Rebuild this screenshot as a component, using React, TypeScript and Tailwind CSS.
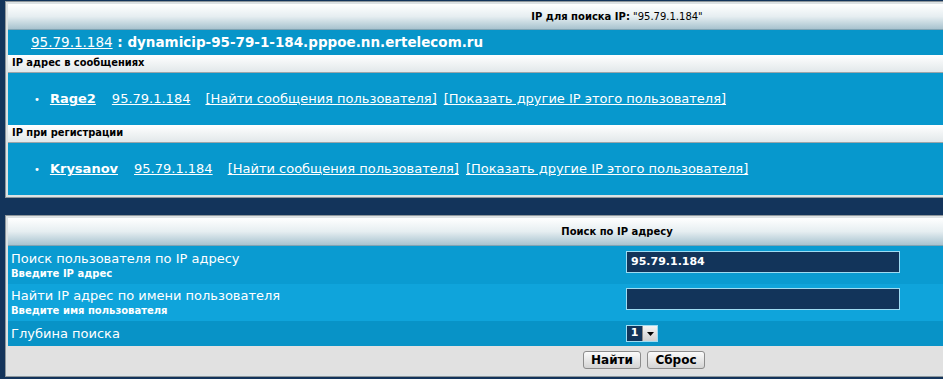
const font = "font-['DejaVu_Sans',Verdana,sans-serif]";

function HeadBar({ children, h }: { children?: React.ReactNode; h: string }) {
  return (
    <div
      className={`${h} flex items-center justify-center border-b border-[#7fa3b3] bg-gradient-to-b from-[#ffffff] via-[#e6eef1] to-[#a8c3cf] text-[10px] text-black`}
    >
      {children}
    </div>
  );
}

function SectionBar({ title }: { title: string }) {
  return (
    <div className="h-[18px] flex items-center border-b border-[#9aa5aa] bg-gradient-to-b from-[#ffffff] to-[#e2e8ea] pl-[4px] font-['DejaVu_Sans_Condensed','DejaVu_Sans',sans-serif] text-[11px] font-bold text-black">
      {title}
    </div>
  );
}

function UserRow({ name }: { name: string }) {
  return (
    <div className="h-[52px] flex items-center bg-[#0798cd] pl-[26px] text-[13px] text-white">
      <span className="mr-[10px] text-[10px]">•</span>
      <a className="font-bold underline">{name}</a>
      <span className="w-[16px]" />
      <a className="underline">95.79.1.184</a>
      <span className="w-[15px]" />
      <a className="underline">[Найти сообщения пользователя]</a>
      <span className="w-[7px]" />
      <a className="underline">[Показать другие IP этого пользователя]</a>
    </div>
  );
}

function Frame({ children }: { children: React.ReactNode }) {
  return (
    <div className="w-[1224px] border border-[#8f979c] bg-[#dde2e4] p-[2px]">
      <div className="flex flex-col">{children}</div>
    </div>
  );
}

function FormRow({
  bg,
  h,
  label,
  hint,
  control,
}: {
  bg: string;
  h: string;
  label: string;
  hint?: string;
  control: React.ReactNode;
}) {
  return (
    <div className={`${h} ${bg} flex items-center text-white`}>
      <div className="w-[618px] pl-[3px] flex flex-col">
        <span className="text-[13px] leading-[16px]">{label}</span>
        {hint && <span className="text-[10px] font-bold leading-[13px]">{hint}</span>}
      </div>
      {control}
    </div>
  );
}

function TextBox({ value, top }: { value?: string; top: string }) {
  return (
    <div className={`${top} self-start w-[274px] h-[22px] border border-[#9fdcf2] bg-[#12345a] pl-[4px] flex items-center text-[11px] font-bold text-white`}>
      {value}
    </div>
  );
}

function Btn({ label }: { label: string }) {
  return (
    <div className="w-[58px] h-[18px] rounded-[3px] border border-[#8c8c8c] bg-gradient-to-b from-[#fbfbfb] to-[#d4d4d4] flex items-center justify-center text-[12px] font-bold text-black">
      {label}
    </div>
  );
}

export default function App() {
  return (
    <div className={`${font} w-[943px] h-[379px] overflow-hidden bg-[#13345b] pl-[5px] pt-[1px]`}>
      <Frame>
        <HeadBar h="h-[26px]">
          <span className="font-bold">IP для поиска IP:</span>
          <span>&nbsp;"95.79.1.184"</span>
        </HeadBar>
        <div className="h-[25px] flex items-center bg-[#0795c9] pl-[23px] text-[13.5px] text-white">
          <a className="underline">95.79.1.184</a>
          <span className="font-bold">&nbsp;: dynamicip-95-79-1-184.pppoe.nn.ertelecom.ru</span>
        </div>
        <SectionBar title="IP адрес в сообщениях" />
        <UserRow name="Rage2" />
        <SectionBar title="IP при регистрации" />
        <UserRow name="Krysanov" />
      </Frame>

      <div className="h-[17px]" />

      <Frame>
        <HeadBar h="h-[28px]">
          <span className="font-bold">Поиск по IP адресу</span>
        </HeadBar>
        <FormRow
          bg="bg-[#0a9bd1]"
          h="h-[38px]"
          label="Поиск пользователя по IP адресу"
          hint="Введите IP адрес"
          control={<TextBox value="95.79.1.184" top="mt-[5px]" />}
        />
        <FormRow
          bg="bg-[#0fa4db]"
          h="h-[37px]"
          label="Найти IP адрес по имени пользователя"
          hint="Введите имя пользователя"
          control={<TextBox top="mt-[4px]" />}
        />
        <FormRow
          bg="bg-[#0893c7]"
          h="h-[25px]"
          label="Глубина поиска"
          control={
            <div className="flex h-[17px] border border-[#9fdcf2]">
              <div className="w-[15px] bg-[#12345a] flex items-center justify-center text-[11px] font-bold text-white">1</div>
              <div className="w-[15px] bg-gradient-to-b from-[#f4f4f4] to-[#cfcfcf] border-l border-[#8c8c8c] flex items-center justify-center">
                <svg width="7" height="4" viewBox="0 0 7 4">
                  <path d="M0 0h7L3.5 4z" fill="#000" />
                </svg>
              </div>
            </div>
          }
        />
        <div className="h-[28px] bg-[#e1e1e1] flex items-center gap-[6px] pl-[575px]">
          <Btn label="Найти" />
          <Btn label="Сброс" />
        </div>
      </Frame>
    </div>
  );
}
